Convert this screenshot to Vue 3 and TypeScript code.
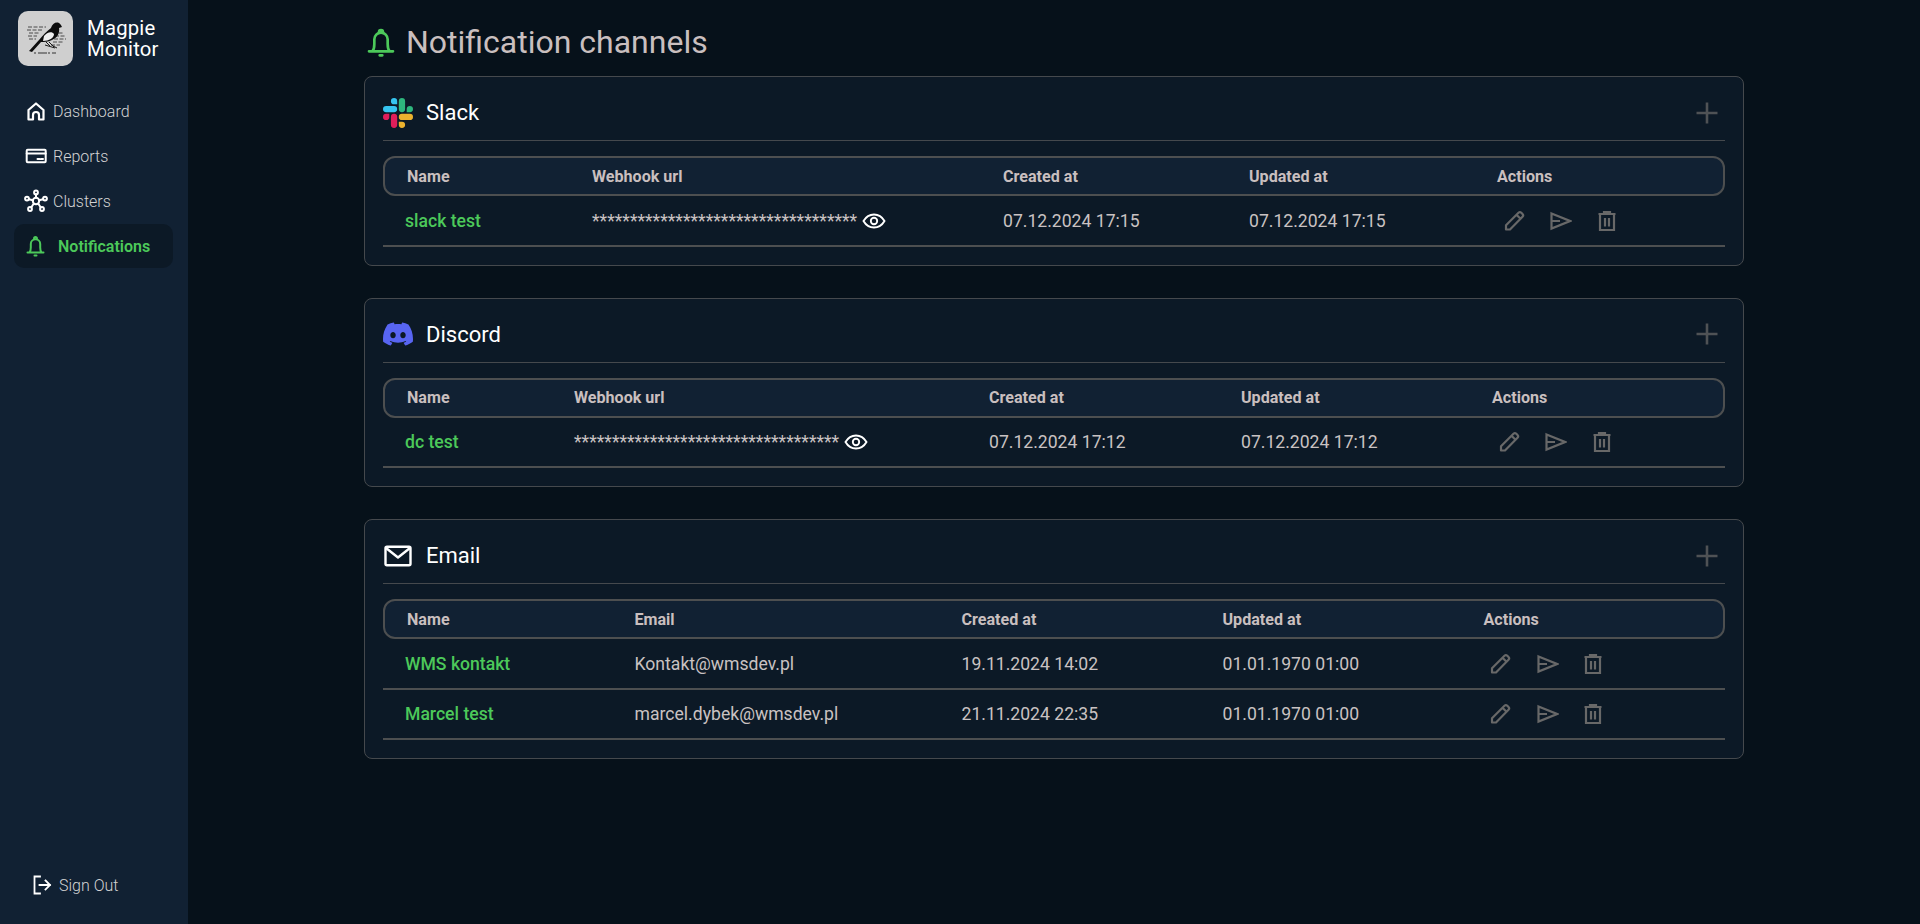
<script setup lang="ts">
interface Row {
  name: string;
  target: string;
  secret: boolean;
  created: string;
  updated: string;
}

interface Channel {
  title: string;
  kind: string;
  targetLabel: string;
  rows: Row[];
}

const navItems = [
  { label: "Dashboard", icon: "home", active: false },
  { label: "Reports", icon: "card", active: false },
  { label: "Clusters", icon: "hub", active: false },
  { label: "Notifications", icon: "bell", active: true },
];

const mask = "*".repeat(35);

const channels: Channel[] = [
  {
    title: "Slack",
    kind: "slack",
    targetLabel: "Webhook url",
    rows: [
      { name: "slack test", target: mask, secret: true, created: "07.12.2024 17:15", updated: "07.12.2024 17:15" },
    ],
  },
  {
    title: "Discord",
    kind: "discord",
    targetLabel: "Webhook url",
    rows: [
      { name: "dc test", target: mask, secret: true, created: "07.12.2024 17:12", updated: "07.12.2024 17:12" },
    ],
  },
  {
    title: "Email",
    kind: "email",
    targetLabel: "Email",
    rows: [
      { name: "WMS kontakt", target: "Kontakt@wmsdev.pl", secret: false, created: "19.11.2024 14:02", updated: "01.01.1970 01:00" },
      { name: "Marcel test", target: "marcel.dybek@wmsdev.pl", secret: false, created: "21.11.2024 22:35", updated: "01.01.1970 01:00" },
    ],
  },
];
</script>

<template>
  <div class="app">
    <aside class="sidebar">
      <div class="brand">
        <div class="logo">
          <svg viewBox="0 0 55 55" width="55" height="55">
            <g fill="none" stroke="#4a4a4a" stroke-width="1" stroke-dasharray="4 1.500">
              <path d="M10 16h18M9 19h16M11 22h11M10 25h9M11 28h7M35 22h11M37 25h11M36 28h12M35 31h10M33 34h9" />
            </g>
            <path d="M16 42h22" fill="none" stroke="#333" stroke-width="1.200" stroke-dasharray="2 2 9 1" />
            <path d="M11 40 L21 29 C25 24 29 20 33 17 C34 13 37 11 40 11.500 C42 12 43 14 44 16 L41 17 C42 22 39 27 34 29 C30 31 26 31 23 31 L14 41Z" fill="#0d0d0d" />
            <path d="M26 25 C29 21 34 20 36 23 C36 27 31 30 25 30Z" fill="#efefef" />
            <path d="M28 31l4 4M31 31l5 5M27 34l10 3M35 35l4 2" stroke="#1a1a1a" stroke-width="1" fill="none" />
          </svg>
        </div>
        <div class="brand-name">Magpie<br />Monitor</div>
      </div>

      <nav class="nav">
        <a v-for="item in navItems" :key="item.label" class="nav-item" :class="{ active: item.active }">
          <svg class="nav-icon" viewBox="0 0 24 24" fill="none" stroke="currentColor" stroke-width="2" stroke-linejoin="round" stroke-linecap="round">
            <template v-if="item.icon === 'home'">
              <path stroke-width="2.200" d="M5.500 20.500V11L13 4.500l7.500 6.500v9.500h-4.500V16a3 3 0 0 0-6 0v4.500z" />
            </template>
            <template v-else-if="item.icon === 'card'">
              <rect x="3.700" y="5.800" width="19" height="12.500" rx="1" />
              <path d="M3.700 9.500h19M14.500 15h2M18 15h2" />
            </template>
            <template v-else-if="item.icon === 'hub'">
              <g transform="translate(1 0)">
                <circle cx="12" cy="12" r="3.200" />
                <circle cx="12" cy="3.400" r="1.900" />
                <circle cx="3" cy="9.600" r="1.900" />
                <circle cx="21" cy="9.600" r="1.900" />
                <circle cx="6" cy="20" r="1.900" />
                <circle cx="18" cy="20" r="1.900" />
                <path d="M12 5.300v3.500M4.800 10.200l4.200 1M19.200 10.200l-4.200 1M7.200 18.500l2.600-4M16.800 18.500l-2.600-4" />
              </g>
            </template>
            <template v-else>
              <path d="M4.500 18.500h16M6.500 18.500c.8-1 1.300-2.500 1.300-5V10a4.700 4.700 0 0 1 9.400 0v3.500c0 2.500.5 4 1.300 5M11 4.500a1.500 1.500 0 0 1 3 0M11.500 21.500h2" />
            </template>
          </svg>
          <span>{{ item.label }}</span>
        </a>
      </nav>

      <a class="sign-out">
        <svg viewBox="0 0 24 24" width="24" height="24" fill="none" stroke="currentColor" stroke-width="1.800" stroke-linecap="square">
          <path d="M10 3.500H4.500v17H10M9.500 12H20M15.500 7.500 20 12l-4.500 4.500" />
        </svg>
        <span>Sign Out</span>
      </a>
    </aside>

    <main class="main">
      <div class="content">
        <h1 class="page-title">
          <svg viewBox="0 0 24 24" width="32" height="32" fill="none" stroke="#4cc95a" stroke-width="2" stroke-linecap="round" stroke-linejoin="round">
            <path d="M3 19h18M5.500 19c1.100-1.200 1.500-3 1.500-5.500V10a5 5 0 0 1 10 0v3.500c0 2.500.4 4.300 1.500 5.500M10.500 4.600a1.500 1.500 0 0 1 3 0M11 22h2" />
          </svg>
          Notification channels
        </h1>

        <section v-for="channel in channels" :key="channel.kind" class="card" :class="channel.kind">
          <header class="card-head">
            <svg v-if="channel.kind === 'slack'" class="brand-icon" viewBox="0 0 24 24">
              <path fill="#E01E5A" d="M5.042 15.165a2.528 2.528 0 0 1-2.52 2.523A2.528 2.528 0 0 1 0 15.165a2.527 2.527 0 0 1 2.522-2.52h2.52v2.52zM6.313 15.165a2.527 2.527 0 0 1 2.521-2.52 2.527 2.527 0 0 1 2.521 2.52v6.313A2.528 2.528 0 0 1 8.834 24a2.528 2.528 0 0 1-2.521-2.522v-6.313z" />
              <path fill="#36C5F0" d="M8.834 5.042a2.528 2.528 0 0 1-2.521-2.52A2.528 2.528 0 0 1 8.834 0a2.528 2.528 0 0 1 2.521 2.522v2.52H8.834zM8.834 6.313a2.528 2.528 0 0 1 2.521 2.521 2.528 2.528 0 0 1-2.521 2.521H2.522A2.528 2.528 0 0 1 0 8.834a2.528 2.528 0 0 1 2.522-2.521h6.312z" />
              <path fill="#2EB67D" d="M18.956 8.834a2.528 2.528 0 0 1 2.522-2.521A2.528 2.528 0 0 1 24 8.834a2.528 2.528 0 0 1-2.522 2.521h-2.522V8.834zM17.688 8.834a2.528 2.528 0 0 1-2.523 2.521 2.527 2.527 0 0 1-2.52-2.521V2.522A2.527 2.527 0 0 1 15.165 0a2.528 2.528 0 0 1 2.523 2.522v6.312z" />
              <path fill="#ECB22E" d="M15.165 18.956a2.528 2.528 0 0 1 2.523 2.522A2.528 2.528 0 0 1 15.165 24a2.527 2.527 0 0 1-2.52-2.522v-2.522h2.52zM15.165 17.688a2.527 2.527 0 0 1-2.52-2.523 2.526 2.526 0 0 1 2.52-2.52h6.313A2.527 2.527 0 0 1 24 15.165a2.528 2.528 0 0 1-2.522 2.523h-6.313z" />
            </svg>
            <svg v-else-if="channel.kind === 'discord'" class="brand-icon" viewBox="0 0 24 24">
              <path fill="#5865F2" d="M20.317 4.3698a19.7913 19.7913 0 00-4.8851-1.5152.0741.0741 0 00-.0785.0371c-.211.3753-.4447.8648-.6083 1.2495-1.8447-.2762-3.68-.2762-5.4868 0-.1636-.3933-.4058-.8742-.6177-1.2495a.077.077 0 00-.0785-.037 19.7363 19.7363 0 00-4.8852 1.515.0699.0699 0 00-.0321.0277C.5334 9.0458-.319 13.5799.0992 18.0578a.0824.0824 0 00.0312.0561c2.0528 1.5076 4.0413 2.4228 5.9929 3.0294a.0777.0777 0 00.0842-.0276c.4616-.6304.8731-1.2952 1.226-1.9942a.076.076 0 00-.0416-.1057c-.6528-.2476-1.2743-.5495-1.8722-.8923a.077.077 0 01-.0076-.1277c.1258-.0943.2517-.1923.3718-.2914a.0743.0743 0 01.0776-.0105c3.9278 1.7933 8.18 1.7933 12.0614 0a.0739.0739 0 01.0785.0095c.1202.099.246.1981.3728.2924a.077.077 0 01-.0066.1276 12.2986 12.2986 0 01-1.873.8914.0766.0766 0 00-.0407.1067c.3604.698.7719 1.3628 1.225 1.9932a.076.076 0 00.0842.0286c1.961-.6067 3.9495-1.5219 6.0023-3.0294a.077.077 0 00.0313-.0552c.5004-5.177-.8382-9.6739-3.5485-13.6604a.061.061 0 00-.0312-.0286zM8.02 15.3312c-1.1825 0-2.1569-1.0857-2.1569-2.419 0-1.3332.9555-2.4189 2.157-2.4189 1.2108 0 2.1757 1.0952 2.1568 2.419 0 1.3332-.9555 2.4189-2.1569 2.4189zm7.9748 0c-1.1825 0-2.1569-1.0857-2.1569-2.419 0-1.3332.9554-2.4189 2.1569-2.4189 1.2108 0 2.1757 1.0952 2.1568 2.419 0 1.3332-.946 2.4189-2.1568 2.4189Z" />
            </svg>
            <svg v-else class="brand-icon" viewBox="0 0 30 24" fill="none" stroke="#fff" stroke-width="2.400" stroke-linejoin="round">
              <rect x="2.500" y="2.800" width="25" height="18.500" rx="1.500" />
              <path d="M3 4l12 9.500L27 4" />
            </svg>
            <span class="card-title">{{ channel.title }}</span>
            <svg class="add" viewBox="0 0 24 24" width="24" height="24" fill="none" stroke="#4f5255" stroke-width="2.600">
              <path d="M12 1.500v21M1.500 12h21" />
            </svg>
          </header>

          <div class="table">
            <div class="grid head">
              <span>Name</span>
              <span>{{ channel.targetLabel }}</span>
              <span>Created at</span>
              <span>Updated at</span>
              <span>Actions</span>
            </div>
            <div v-for="row in channel.rows" :key="row.name" class="grid row">
              <span class="name">{{ row.name }}</span>
              <span class="target">
                <span>{{ row.target }}</span>
                <svg v-if="row.secret" class="eye" viewBox="0 0 24 24" width="24" height="24" fill="none" stroke="#fff" stroke-width="1.900">
                  <path d="M1.500 12C4 7.700 7.600 5.500 12 5.500s8 2.200 10.500 6.500C20 16.300 16.400 18.500 12 18.500S4 16.300 1.500 12z" />
                  <circle cx="12" cy="12" r="3.200" />
                </svg>
              </span>
              <span>{{ row.created }}</span>
              <span>{{ row.updated }}</span>
              <span class="actions">
                <svg viewBox="0 0 24 24" width="24" height="24" fill="none" stroke="#686868" stroke-width="2.200" stroke-linejoin="round">
                  <path d="M4 20.500v-4.200L16.500 3.800a2 2 0 0 1 2.800 0l1.200 1.200a2 2 0 0 1 0 2.800L8 20.500zM14.500 5.800l4 4" />
                </svg>
                <svg viewBox="0 0 24 24" width="24" height="24" fill="none" stroke="#686868" stroke-width="2.200" stroke-linejoin="miter">
                  <path d="M3.500 4.500 22 12 3.500 19.500zM3.500 12H12" />
                </svg>
                <svg viewBox="0 0 24 24" width="24" height="24" fill="none" stroke="#686868" stroke-width="2.200">
                  <path d="M3.500 5h17M9 5V3h6v2M5 5v16h14V5M10 9v8.500M14 9v8.500" />
                </svg>
              </span>
            </div>
          </div>
        </section>
      </div>
    </main>
  </div>
</template>

<style>
html,
body {
  margin: 0;
  background: #06111a;
}
</style>

<style scoped>
.app {
  display: flex;
  height: 924px;
  overflow: hidden;
  font-family: Roboto, "Liberation Sans", sans-serif;
  color: #c9c2c2;
  background: #06111a;
}

/* sidebar */
.sidebar {
  width: 188px;
  flex: none;
  display: flex;
  flex-direction: column;
  background: #112133;
  box-sizing: border-box;
  padding: 11px 15px 0 14px;
}

.brand {
  display: flex;
  align-items: center;
  gap: 14px;
  padding-left: 4px;
}

.logo {
  width: 55px;
  height: 55px;
  flex: none;
  border-radius: 10px;
  background: #cfcfcf;
  overflow: hidden;
}

.logo svg {
  display: block;
}

.brand-name {
  font-size: 20.300px;
  line-height: 21px;
  color: #fff;
  letter-spacing: 0.2px;
}

.nav {
  margin-top: 23px;
  display: flex;
  flex-direction: column;
  gap: 1px;
}

.nav-item {
  height: 44px;
  display: flex;
  align-items: center;
  gap: 6px;
  padding-left: 9px;
  border-radius: 10px;
  font-size: 16px;
  font-weight: 300;
  color: #d3d3d3;
}

.nav-icon {
  width: 24px;
  height: 24px;
  color: #fff;
  flex: none;
  overflow: visible;
}

.nav-item.active {
  background: #0c1926;
  color: #4cc95a;
  font-weight: 600;
  gap: 11px;
}

.nav-item.active .nav-icon {
  color: #4cc95a;
}

.sign-out {
  margin-top: auto;
  margin-bottom: 27px;
  display: flex;
  align-items: center;
  gap: 5px;
  padding-left: 16px;
  font-size: 16px;
  font-weight: 300;
  color: #d3d3d3;
}

.sign-out svg {
  color: #fff;
}

/* main */
.main {
  flex: 1;
  min-width: 0;
}

.content {
  width: 1380px;
  margin-left: 176px;
}

.page-title {
  height: 76px;
  margin: 0;
  display: flex;
  align-items: center;
  gap: 9px;
  padding: 8px 0 0 1px;
  box-sizing: border-box;
  font-size: 32px;
  font-weight: 400;
  color: #c9bfbf;
}

.card {
  border: 1px solid #45494d;
  border-radius: 8px;
  background: #0c1926;
  padding: 0 18px 18px;
  margin-bottom: 31.500px;
}

.card.discord {
  margin-bottom: 32.500px;
}

.card-head {
  height: 64px;
  box-sizing: border-box;
  padding-top: 8px;
  display: flex;
  align-items: center;
  border-bottom: 1px solid #45494d;
}

.brand-icon {
  width: 30px;
  height: 30px;
  flex: none;
}

.card-title {
  margin-left: 13px;
  font-size: 22px;
  color: #fff;
}

.add {
  margin-left: auto;
  margin-right: 6px;
}

.table {
  margin-top: 15px;
}

.grid {
  display: grid;
  align-items: center;
  padding-left: 24px;
}

.slack .grid {
  grid-template-columns: 185px 411px 246px 248px 1fr;
}

.discord .grid {
  grid-template-columns: 167px 415px 252px 251px 1fr;
}

.email .grid {
  grid-template-columns: 227.500px 327px 261px 261px 1fr;
}

.head {
  height: 40px;
  box-sizing: border-box;
  border: 2px solid #4d4f50;
  border-radius: 12px;
  background: #112133;
  padding-left: 22px;
  margin-bottom: 1px;
  font-size: 16.100px;
  font-weight: 700;
  color: #c9bfbf;
}

.discord .head {
  margin-bottom: 0;
}

.row {
  height: 50px;
  box-sizing: border-box;
  border-bottom: 2px solid #4d4f50;
  font-size: 17.600px;
  color: #c9c2c2;
}

.name {
  margin-left: -2px;
  font-weight: 500;
  color: #4cc95a;
}

.target {
  display: flex;
  align-items: center;
  gap: 5px;
}

.actions {
  display: flex;
  align-items: center;
  gap: 22.500px;
  margin-left: 4.500px;
}
</style>
